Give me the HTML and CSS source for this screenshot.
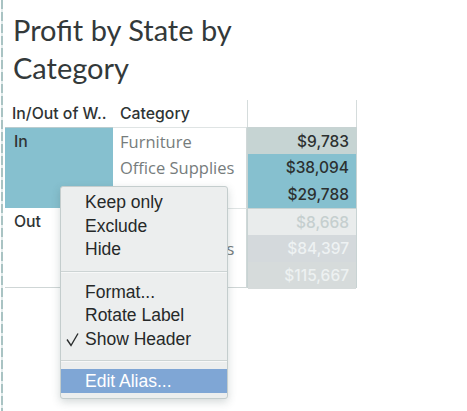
FILE: index.html
```html
<!DOCTYPE html>
<html>
<head>
<meta charset="utf-8">
<link rel="stylesheet" href="styles.css">
</head>
<body>
<div class="page">
  <div class="edge"></div>
  <div class="content">
    <h1 class="title">Profit by State by<br>Category</h1>
    <div class="crosstab">
      <div class="hdr hdr-dim">In/Out of W..</div>
      <div class="hdr hdr-dim">Category</div>
      <div class="hdr hdr-val"></div>

      <div class="grp grp-in"><span>In</span></div>
      <div class="cats">
        <div class="cat">Furniture</div>
        <div class="cat">Office Supplies</div>
        <div class="cat">Technology</div>
      </div>
      <div class="vals">
        <div class="val v-grey">$9,783</div>
        <div class="val v-blue">$38,094</div>
        <div class="val v-blue">$29,788</div>
      </div>

      <div class="grp grp-out"><span>Out</span></div>
      <div class="cats cats-out">
        <div class="cat">Furniture</div>
        <div class="cat">Office Supplies</div>
        <div class="cat">Technology</div>
      </div>
      <div class="vals vals-out">
        <div class="val v-light">$8,668</div>
        <div class="val v-mid">$84,397</div>
        <div class="val v-mid2">$115,667</div>
      </div>
    </div>
  </div>
</div>

<div class="menu">
  <div class="item"><span class="chk"></span>Keep only</div>
  <div class="item"><span class="chk"></span>Exclude</div>
  <div class="item"><span class="chk"></span>Hide</div>
  <div class="sep"></div>
  <div class="item"><span class="chk"></span>Format...</div>
  <div class="item"><span class="chk"></span>Rotate Label</div>
  <div class="item"><span class="chk"><svg width="13" height="15" viewBox="0 0 13 15"><polyline points="1,7.5 5,13.5 12,1.5" fill="none" stroke="#2a2d2d" stroke-width="1.4"/></svg></span>Show Header</div>
  <div class="sep sep2"></div>
  <div class="item item-active"><span class="chk"></span>Edit Alias...</div>
</div>
</body>
</html>
```

FILE: styles.css
```css
* { box-sizing: border-box; }
html, body { margin: 0; padding: 0; background: #fff; }
body { width: 467px; height: 411px; overflow: hidden; position: relative; }

.page { display: flex; height: 411px; padding-left: 1px; }
.edge {
  width: 2px; flex: none;
  background: repeating-linear-gradient(to bottom, #a9c3c3 0 9px, #e4eded 9px 12px);
}
.content { padding-left: 2px; flex: 1; }

.title {
  margin: 11px 0 0 0;
  padding-left: 8px;
  font-family: Lato, "Open Sans", sans-serif;
  font-weight: 400;
  font-size: 29px;
  line-height: 38px;
  color: #33393a;
}

.crosstab {
  margin-top: 13px;
  display: grid;
  grid-template-columns: 108px 134px 110px;
  grid-template-rows: 27px 81px 80px;
  font-family: "Open Sans", sans-serif;
  font-size: 16.5px;
}
.hdr { line-height: 27px; padding-left: 7px; color: #2f3434; font-family: Inter, "Open Sans", sans-serif; font-weight: 500; font-size: 15.8px; white-space: nowrap; }
.hdr-val { border-left: 1px solid #d5dcdc; border-right: 1px solid #d5dcdc; }

.grp { padding: 3px 0 0 9px; color: #2f3434; font-family: Inter, "Open Sans", sans-serif; font-weight: 500; font-size: 15.8px; line-height: 22px; }
.grp-in { background: #86c0cf; border-top: 1px solid #b9cccf; }
.grp-out { background: #fff; border-bottom: 1px solid #cfd6d6; }

.cats { border-top: 1px solid #dfe4e4; border-right: 1px solid #cfd8d8; background: #fff; }
.cats-out { border-bottom: 1px solid #cfd6d6; }
.cat { height: 27px; line-height: 27px; padding-left: 7px; color: #767c7c; white-space: nowrap; }
.cats .cat:first-child { height: 26px; }

.vals { border-left: 1px solid #c8d3d3; border-right: 1px solid #c8d3d3; border-top: 1px solid #c8d3d3; }
.vals-out { border-bottom: 1px solid #c8d3d3; }
.val { height: 27px; line-height: 27px; text-align: right; padding-right: 7px; font-family: Inter, "Open Sans", sans-serif; font-size: 15.5px; font-weight: 500; color: #2c3030; }
.vals .val:first-child { height: 26px; }
.v-grey { background: #c6d4d3; }
.v-blue { background: #86c0cf; }
.v-light { background: #e9ecec; color: #c5cfcf; }
.v-mid { background: #d4d9dc; color: #eef2f3; }
.v-mid2 { background: #d6dbdb; color: #edf1f1; }

.menu {
  position: absolute;
  left: 60px; top: 186px;
  width: 168px;
  background: #eceeee;
  border: 1px solid #c4cdcd;
  border-radius: 3px;
  box-shadow: 0 3px 9px rgba(60, 80, 80, 0.22);
  padding: 4px 0 5px 0;
  font-family: "Liberation Sans", Arial, sans-serif;
  font-size: 17.5px;
  color: #262929;
}
.item { display: flex; align-items: center; height: 23.5px; padding-left: 5px; white-space: nowrap; }
.chk { width: 19px; flex: none; display: flex; align-items: center; }
.sep { height: 1px; background: #cdd4d4; margin: 9px 0 9px 0; box-shadow: 0 1px 0 #f7f8f8; }
.sep2 { margin-bottom: 8px; }
.item-active { height: 24px; background: #7fa6d5; color: #fff; }
```
